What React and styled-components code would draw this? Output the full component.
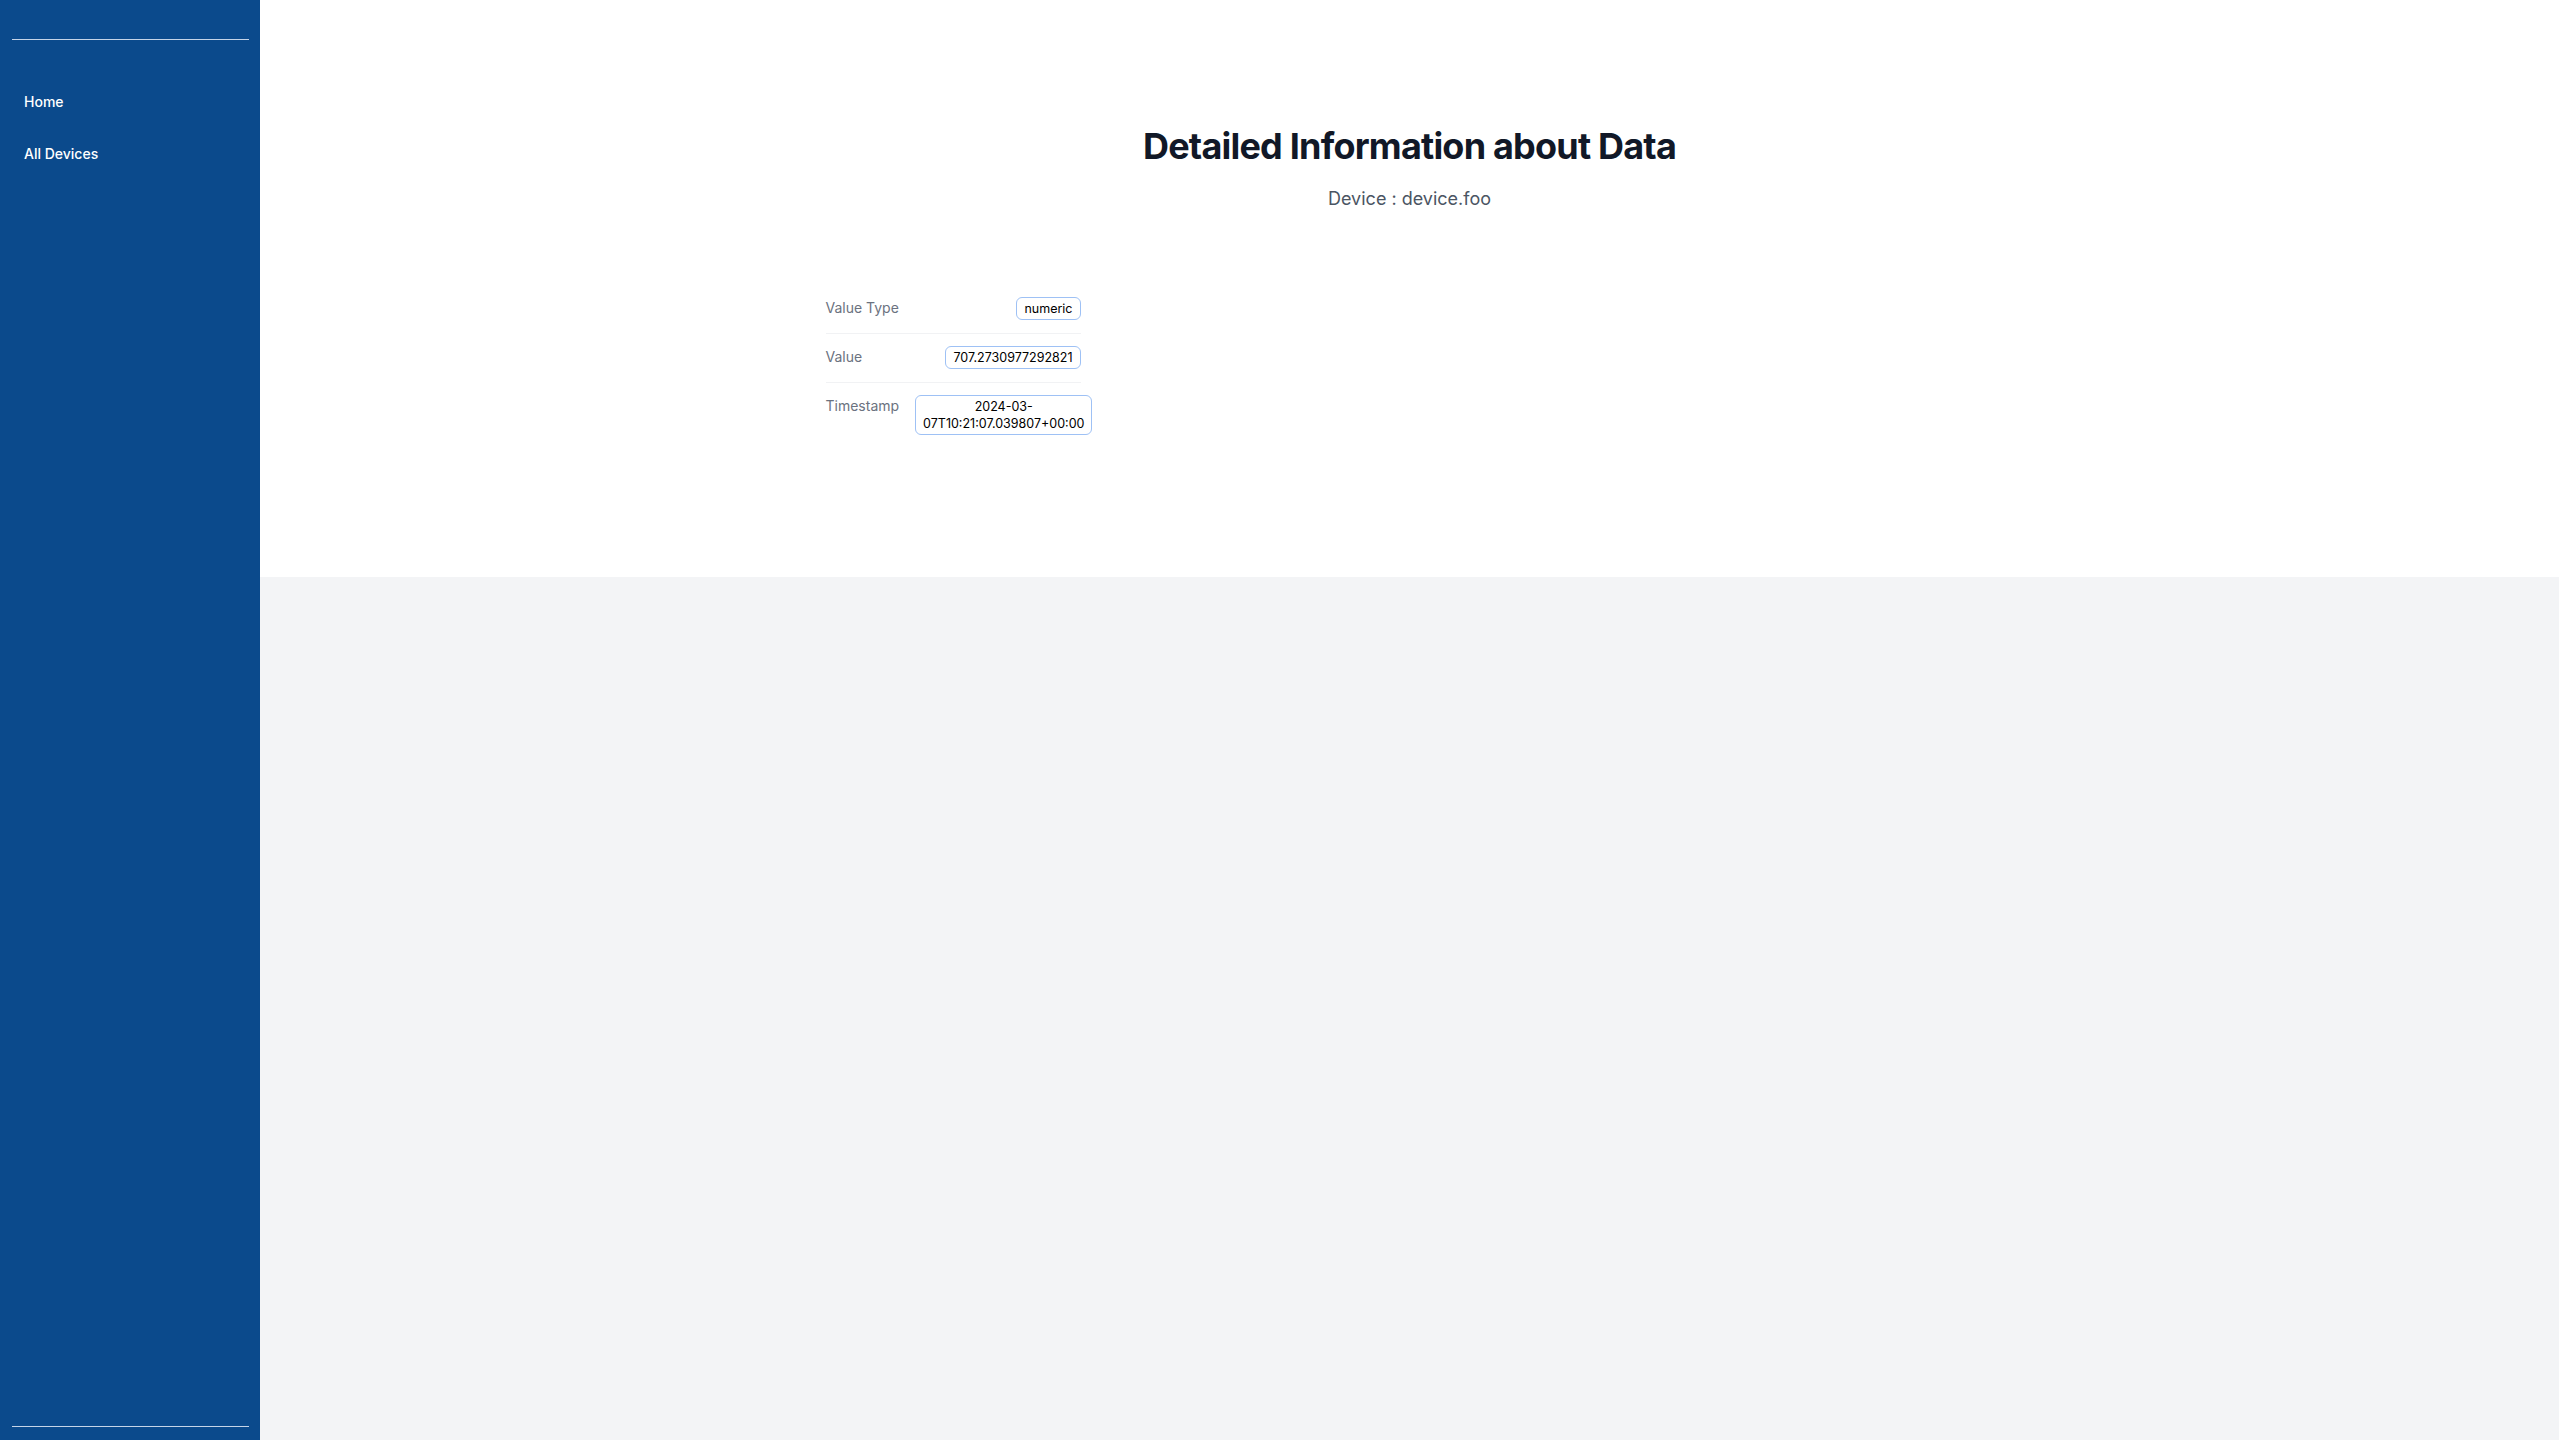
import React from "react";
import styled, { createGlobalStyle } from "styled-components";

const GlobalStyle = createGlobalStyle`
  html, body {
    margin: 0;
    padding: 0;
    height: 100%;
  }
  body {
    font-family: Inter, "Liberation Sans", sans-serif;
    background: #f3f4f6;
  }
  #root {
    min-height: 100vh;
  }
`;

const dataItem = {
  device: "device.foo",
  valueType: "numeric",
  value: "707.2730977292821",
  timestamp: "2024-03-07T10:21:07.039807+00:00",
};

const App = () => {
  const rows = [
    { label: "Value Type", value: dataItem.valueType },
    { label: "Value", value: dataItem.value },
    { label: "Timestamp", value: dataItem.timestamp },
  ];

  return (
    <>
      <GlobalStyle />
      <Layout>
        <Sidebar>
          <Divider />
          <Nav>
            <NavLink href="#">Home</NavLink>
            <NavLink href="#">All Devices</NavLink>
          </Nav>
          <Divider />
        </Sidebar>
        <Main>
          <Header>
            <Title>Detailed Information about Data</Title>
            <Subtitle>Device : {dataItem.device}</Subtitle>
            <Container>
              <DetailList>
                {rows.map((row) => (
                  <Row key={row.label}>
                    <Label>{row.label}</Label>
                    <Badge>{row.value}</Badge>
                  </Row>
                ))}
              </DetailList>
            </Container>
          </Header>
        </Main>
      </Layout>
    </>
  );
};

export default App;

const Layout = styled.div`
  display: flex;
  min-height: 100vh;
`;

const Sidebar = styled.aside`
  width: 260px;
  flex-shrink: 0;
  background: #0b4a8c;
  display: flex;
  flex-direction: column;
  padding: 39px 11px 13px 12px;
  box-sizing: border-box;
`;

const Divider = styled.hr`
  margin: 0;
  border: none;
  border-top: 1px solid #c5d4e8;
`;

const Nav = styled.nav`
  flex: 1;
  display: flex;
  flex-direction: column;
  gap: 32px;
  padding: 52px 0 0 12px;
`;

const NavLink = styled.a`
  color: #ffffff;
  text-decoration: none;
  font-size: 14px;
  line-height: 20px;
  font-weight: 500;
`;

const Main = styled.main`
  flex: 1;
  background: #f3f4f6;
`;

const Header = styled.section`
  background: #ffffff;
  height: 577px;
  box-sizing: border-box;
  padding-top: 124px;
  display: flex;
  flex-direction: column;
  align-items: center;
`;

const Title = styled.h1`
  margin: 0;
  font-size: 36px;
  line-height: 44px;
  font-weight: 700;
  letter-spacing: -0.022em;
  color: #111827;
`;

const Subtitle = styled.p`
  margin: 17px 0 0;
  font-size: 18px;
  line-height: 28px;
  color: #4b5563;
`;

const Container = styled.div`
  width: 100%;
  max-width: 1168px;
  margin-top: 72px;
`;

const DetailList = styled.dl`
  margin: 0;
  width: 255px;
`;

const Row = styled.div`
  display: flex;
  justify-content: space-between;
  align-items: flex-start;
  gap: 16px;
  padding: 12px 0 13px;
  border-bottom: 1px solid #f1f2f4;

  &:last-child {
    border-bottom: none;
  }
`;

const Label = styled.dt`
  font-size: 14px;
  line-height: 22px;
  color: #6b7280;
  white-space: nowrap;
`;

const Badge = styled.dd`
  margin: 0;
  padding: 2px 7px;
  border: 1px solid #9ec1f5;
  border-radius: 6px;
  font-size: 12.5px;
  line-height: 17px;
  color: #000000;
  text-align: center;
`;
